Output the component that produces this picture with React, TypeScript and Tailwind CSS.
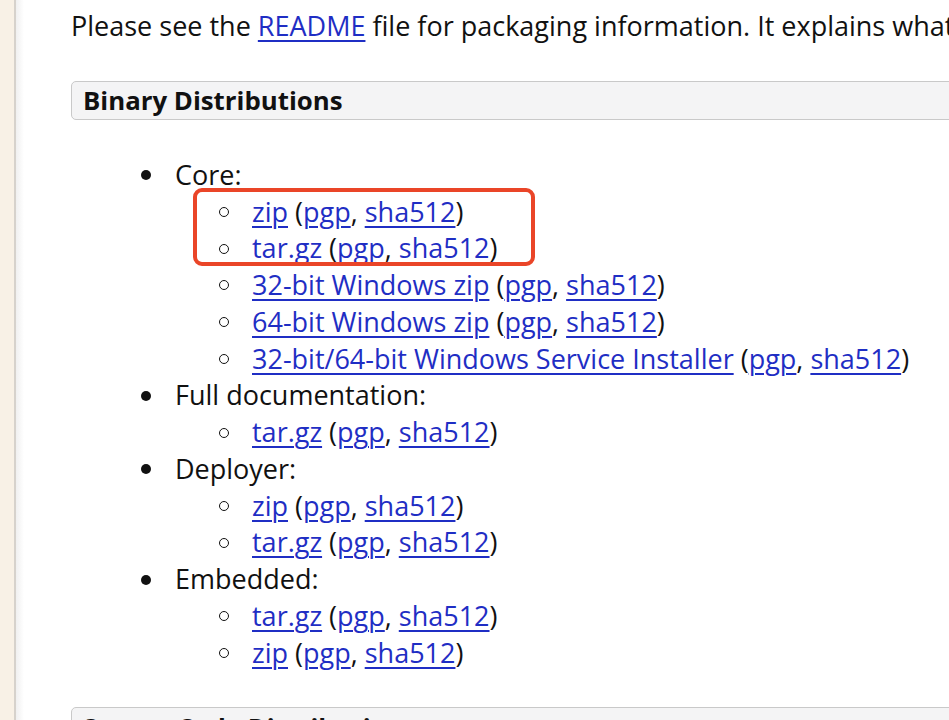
import React from "react";

const L = ({ children }: { children: React.ReactNode }) => (
  <a href="#" className="text-[#1f2ec4] underline decoration-[1.5px] underline-offset-[4px]">
    {children}
  </a>
);

const Sub = ({ name }: { name: string }) => (
  <li className="flex items-center">
    <span className="w-[181px] flex justify-end pr-[23px] shrink-0">
      <span className="block w-[10px] h-[10px] rounded-full border-[1.6px] border-[#111]" />
    </span>
    <span className="whitespace-nowrap">
      <L>{name}</L> (<L>pgp</L>, <L>sha512</L>)
    </span>
  </li>
);

const Top = ({ label, items }: { label: string; items: string[] }) => (
  <li>
    <div className="flex items-center">
      <span className="w-[104px] flex pl-[70px] shrink-0">
        <span className="block w-[10px] h-[10px] rounded-full bg-[#111]" />
      </span>
      <span>{label}</span>
    </div>
    <ul>
      {items.map((n, i) => (
        <Sub key={i} name={n} />
      ))}
    </ul>
  </li>
);

export default function App() {
  return (
    <div
      className="w-[949px] h-[720px] overflow-hidden flex bg-white text-[#111]"
      style={{ fontFamily: '"Open Sans", "Liberation Sans", sans-serif' }}
    >
      <div className="w-[14px] shrink-0 bg-[#f8f1e6]" />
      <div className="w-[2px] shrink-0 bg-[#d6d2cc]" />
      <div className="w-[8px] shrink-0 bg-gradient-to-r from-[#f0f0f0] to-white" />
      <div className="flex-1 min-w-0 pl-[47px] pt-[8px] text-[27px] leading-[36.77px] relative">
        <p className="whitespace-nowrap">
          Please see the <L>README</L> file for packaging information. It explains what
        </p>
        <div className="mt-[36px] w-[1000px] h-[39px] rounded-[5px] border border-[#c9c9c9] bg-[#f4f4f5] flex items-center px-[11px] font-bold text-[25.8px]">
          Binary Distributions
        </div>
        <ul className="mt-[37px] relative">
          <Top
            label="Core:"
            items={[
              "zip",
              "tar.gz",
              "32-bit Windows zip",
              "64-bit Windows zip",
              "32-bit/64-bit Windows Service Installer",
            ]}
          />
          <Top label="Full documentation:" items={["tar.gz"]} />
          <Top label="Deployer:" items={["zip", "tar.gz"]} />
          <Top label="Embedded:" items={["tar.gz", "zip"]} />
          <div className="absolute left-[122px] top-[31px] w-[342px] h-[78px] rounded-[9px] border-[4px] border-[#ea4528] pointer-events-none" />
        </ul>
        <div className="mt-[36px] w-[1000px] h-[39px] rounded-[5px] border border-[#c9c9c9] bg-[#f4f4f5] flex items-center px-[11px] font-bold text-[25.8px]">
          Source Code Distributions
        </div>
      </div>
    </div>
  );
}
